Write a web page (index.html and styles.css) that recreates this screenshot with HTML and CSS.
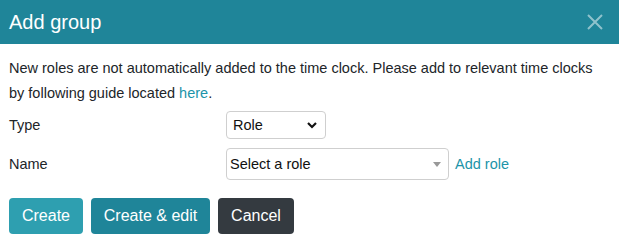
FILE: index.html
```html
<!DOCTYPE html>
<html>
<head>
<meta charset="utf-8">
<link rel="stylesheet" href="styles.css">
</head>
<body>
<div class="modal">
  <div class="header">
    <div class="title">Add group</div>
    <svg class="close" width="16" height="16" viewBox="0 0 16 16"><path d="M1 1L15 15M15 1L1 15" stroke="currentColor" stroke-width="2" fill="none"/></svg>
  </div>
  <div class="content">
    <p class="info">New roles are not automatically added to the time clock. Please add to relevant time clocks by following guide located <a class="link" href="#">here</a>.</p>
    <div class="row row-type">
      <div class="label">Type</div>
      <div class="select select-type">
        <span>Role</span>
        <svg class="chev" width="10" height="7" viewBox="0 0 10 7"><path d="M1 1L5 5L9 1" stroke="#111" stroke-width="2.2" fill="none"/></svg>
      </div>
    </div>
    <div class="row row-name">
      <div class="label">Name</div>
      <div class="select select-name">
        <span>Select a role</span>
        <svg class="tri" width="8" height="5" viewBox="0 0 8 5"><path d="M0 0H8L4 5Z" fill="#999"/></svg>
      </div>
      <a class="link addrole" href="#">Add role</a>
    </div>
    <div class="buttons">
      <button class="btn btn-create">Create</button>
      <button class="btn btn-edit">Create &amp; edit</button>
      <button class="btn btn-cancel">Cancel</button>
    </div>
  </div>
</div>
</body>
</html>
```
FILE: styles.css
```css
* { box-sizing: border-box; }
body {
  margin: 0;
  font-family: "Liberation Sans", Arial, sans-serif;
  font-size: 14.5px;
  color: #212529;
  background: #fff;
}
.header {
  height: 44px;
  background: #1f8599;
  display: flex;
  align-items: center;
  justify-content: space-between;
  padding: 0 16px 0 9px;
}
.title {
  color: #fff;
  font-size: 20px;
}
.close {
  color: rgba(255,255,255,0.5);
}
.content {
  padding: 12px 9px;
}
.info {
  margin: 0;
  line-height: 25px;
}
.link {
  color: #1c94a9;
  text-decoration: none;
}
.row {
  display: flex;
  align-items: center;
}
.row-type { margin-top: 5px; }
.row-name { margin-top: 9px; }
.label {
  width: 217px;
}
.select {
  display: flex;
  align-items: center;
  justify-content: space-between;
  border: 1px solid #cfcfcf;
  border-radius: 4px;
  background: #fff;
  color: #111;
}
.select-type {
  width: 100px;
  height: 28px;
  padding: 0 8px 0 6px;
}
.select-name {
  width: 223px;
  height: 32px;
  padding: 0 7px 0 3px;
}
.addrole {
  margin-left: 6px;
}
.buttons {
  display: flex;
  gap: 8px;
  margin-top: 18px;
}
.btn {
  height: 36px;
  border: none;
  border-radius: 4px;
  color: #fff;
  font-family: "Liberation Sans", Arial, sans-serif;
  font-size: 16px;
  padding: 0 10px;
}
.btn-create { background: #2e9fb0; width: 74px; }
.btn-edit { background: #1f8599; width: 119px; }
.btn-cancel { background: #343a40; width: 76px; }
```
